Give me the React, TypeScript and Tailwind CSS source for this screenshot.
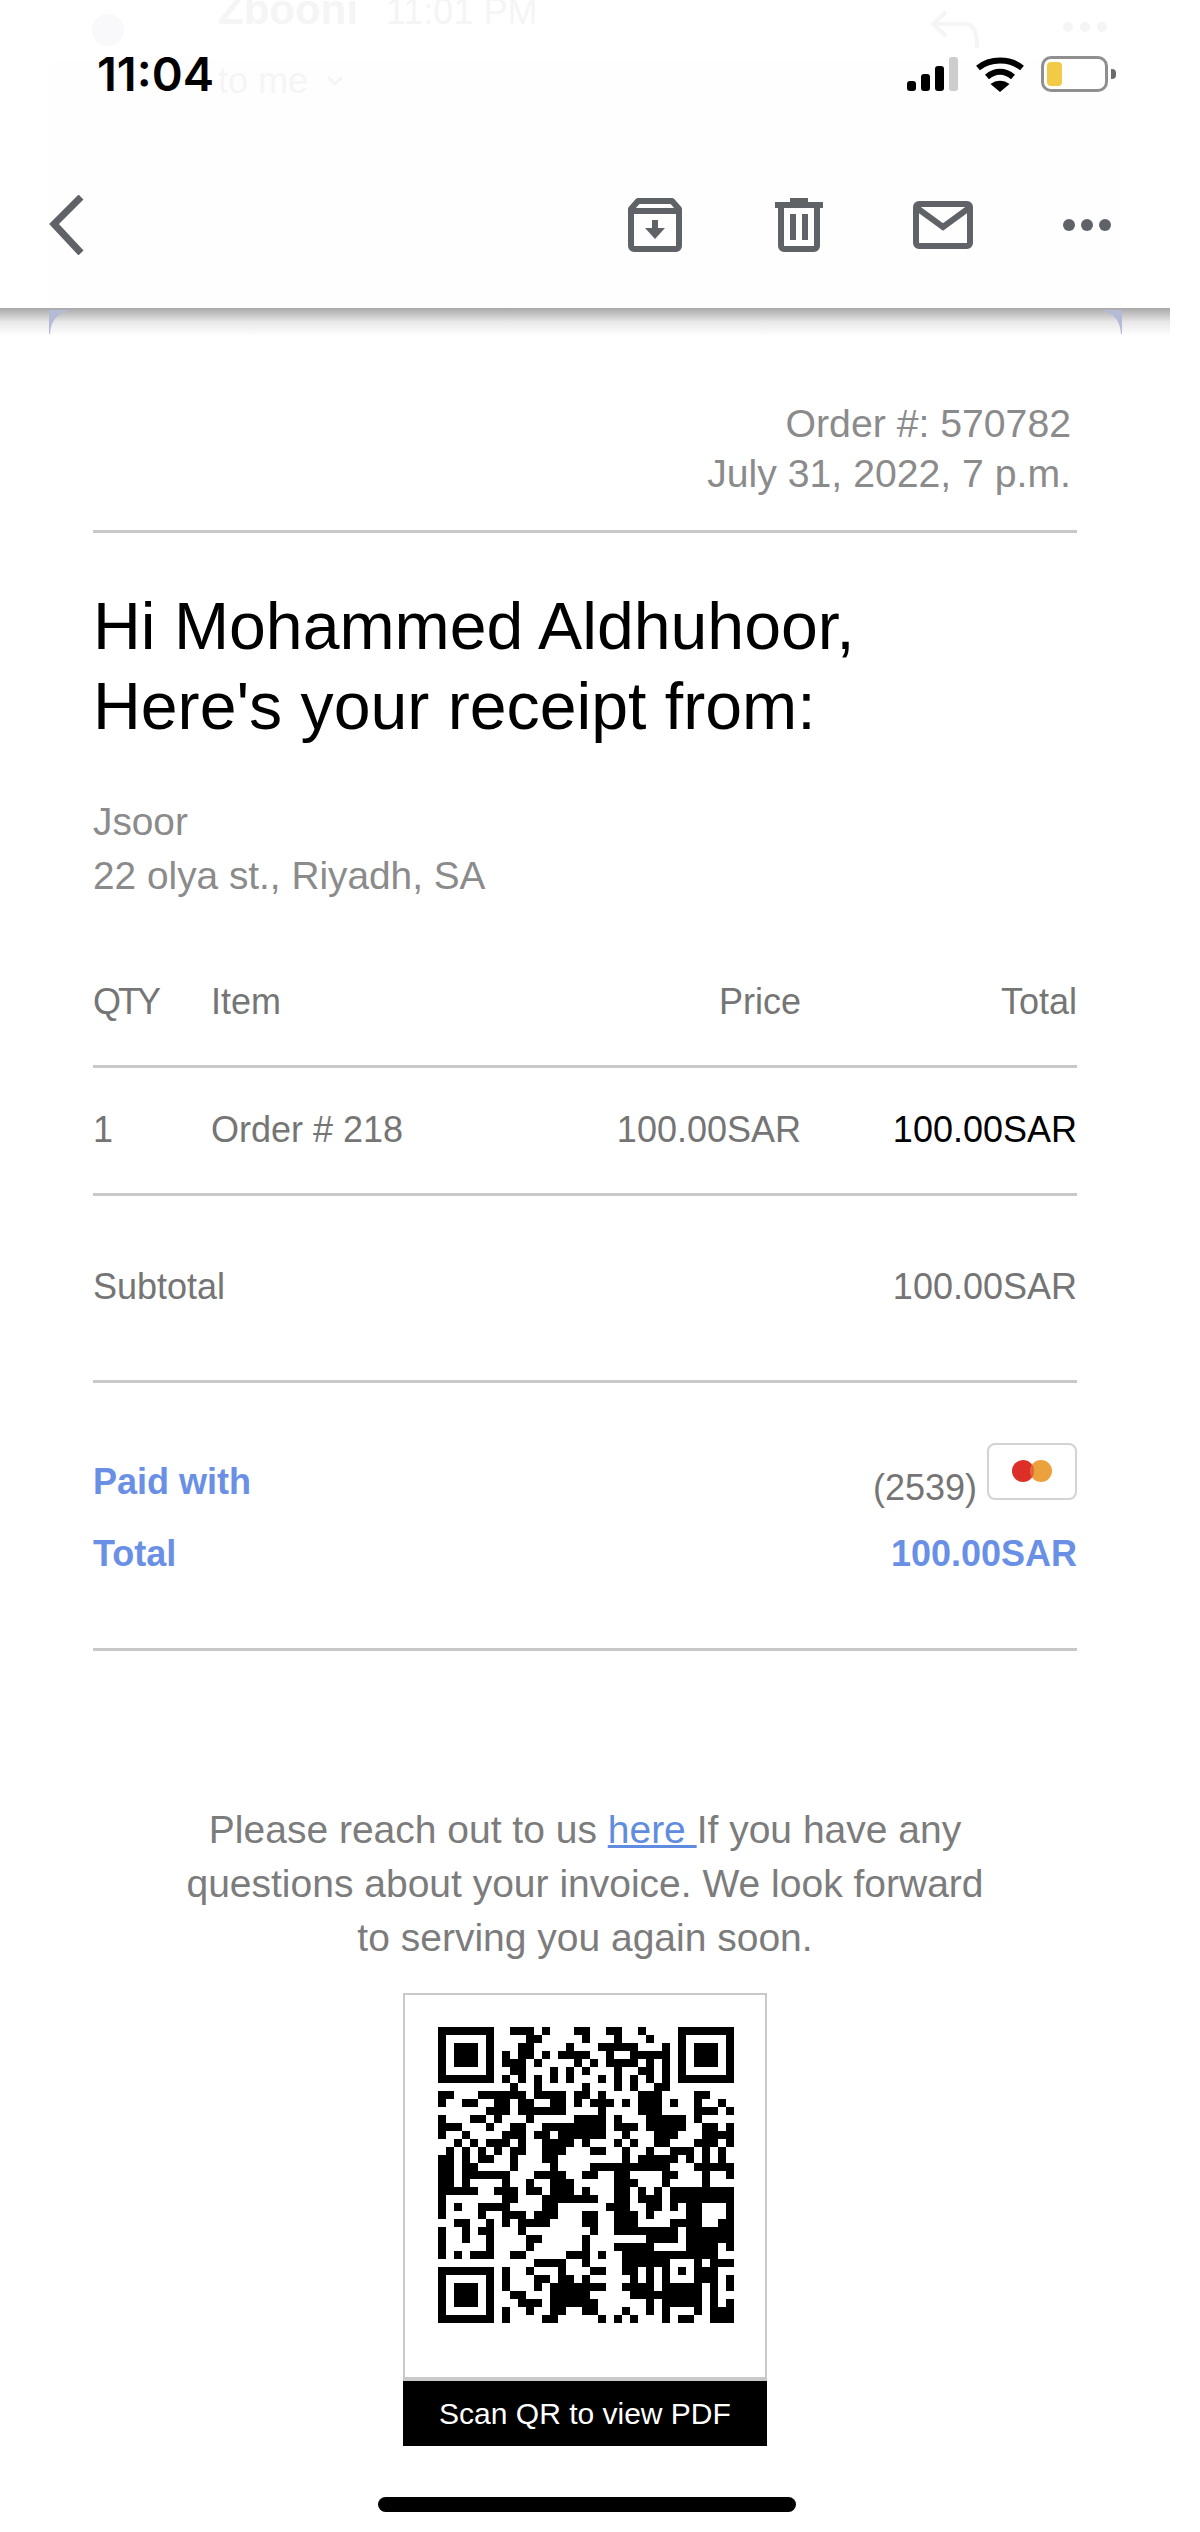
const QR_ROWS: number[][] = [
  [9, 10, 11, 13, 17, 18, 21, 22, 25],
  [11, 12, 18, 22, 26],
  [10, 11, 16, 20, 21, 22, 23, 24, 28],
  [8, 10, 11, 13, 15, 16, 17, 18, 21, 24, 25, 26, 27, 28],
  [8, 9, 10, 12, 17, 19, 21, 22, 23, 24, 26, 28],
  [9, 10, 14, 16, 18, 22, 25, 26, 28],
  [8, 10, 12, 14, 16, 20, 22, 24, 26, 28],
  [9, 12, 18, 22, 24, 27, 28],
  [0, 1, 5, 6, 7, 8, 9, 10, 12, 13, 14, 15, 17, 18, 20, 26, 32, 33],
  [0, 3, 4, 7, 8, 10, 11, 14, 15, 17, 19, 20, 21, 23, 25, 26, 27, 29, 32, 35],
  [6, 7, 8, 10, 11, 12, 13, 14, 15, 20, 25, 26, 27, 32, 33, 34, 36],
  [0, 4, 5, 7, 11, 17, 18, 20, 22, 26, 27, 30, 32],
  [0, 1, 2, 6, 9, 10, 13, 14, 15, 16, 17, 19, 20, 22, 23, 24, 26, 27, 29, 30, 33, 34, 36],
  [0, 3, 8, 9, 10, 12, 13, 15, 16, 17, 19, 20, 23, 27, 28, 29, 33, 34, 35, 36],
  [2, 4, 6, 7, 8, 10, 14, 15, 18, 22, 24, 27, 28, 32, 33, 34, 36],
  [1, 3, 5, 7, 9, 10, 13, 19, 20, 23, 26, 29, 30, 31, 33, 35],
  [0, 1, 3, 5, 6, 9, 13, 14, 23, 25, 26, 27, 28, 29, 31, 33, 35],
  [0, 1, 3, 4, 9, 14, 19, 20, 21, 22, 23, 26, 27, 28, 32, 33, 34, 35, 36],
  [0, 1, 3, 4, 5, 6, 7, 8, 12, 13, 14, 15, 18, 19, 22, 23, 28, 29, 33, 36],
  [0, 1, 3, 8, 11, 15, 16, 23, 24, 28, 33],
  [0, 1, 2, 3, 4, 7, 8, 9, 11, 12, 15, 16, 18, 22, 23, 25, 27, 30, 31, 32, 33, 34, 35, 36],
  [0, 8, 9, 13, 14, 19, 23, 25, 26, 27, 29, 31, 32, 33, 34],
  [0, 2, 5, 6, 7, 8, 13, 14, 21, 22, 23, 26, 27, 29, 31, 32, 36],
  [0, 5, 8, 9, 10, 12, 13, 14, 18, 23, 24, 26, 32, 36],
  [2, 3, 6, 8, 10, 11, 12, 13, 18, 19, 23, 24, 29, 30, 35, 36],
  [0, 3, 5, 6, 10, 19, 23, 24, 25, 27, 31, 33, 35, 36],
  [0, 3, 6, 11, 12, 18, 26, 27, 28, 29, 32, 34, 35, 36],
  [0, 6, 11, 18, 22, 23, 24, 25, 26, 32, 33, 36],
  [0, 2, 4, 5, 6, 9, 10, 18, 20, 23, 24, 25, 28, 29, 30, 31, 32, 33, 34],
  [12, 13, 14, 15, 18, 23, 24, 25, 26, 27, 28, 32, 34, 35, 36],
  [8, 11, 15, 19, 20, 23, 24, 26, 28, 30, 32, 33, 34],
  [8, 12, 13, 15, 16, 18, 24, 26, 28, 32, 33, 34, 36],
  [8, 12, 15, 16, 18, 19, 20, 23, 24, 25, 26, 28, 29, 30, 31, 32, 34, 36],
  [9, 10, 15, 16, 26, 27, 28, 29, 30, 31, 32, 34],
  [10, 11, 12, 15, 19, 26, 28, 29, 30, 31, 32, 34, 36],
  [8, 11, 14, 15, 18, 19, 23, 26, 28, 32, 34, 35, 36],
  [8, 13, 14, 20, 22, 24, 28, 30, 31, 34, 35, 36],
]

// solid patches of the code: [col, row, width, height]
const QR_BLOCKS: number[][] = [
  [13, 12, 5, 1], [13, 13, 1, 1], [15, 13, 3, 1], [13, 14, 4, 1], [13, 15, 3, 1],
  [18, 11, 3, 3], [25, 8, 3, 3], [26, 11, 2, 1], [28, 11, 3, 2],
  [25, 16, 4, 2], [19, 17, 6, 1],
  [12, 18, 4, 1], [14, 19, 2, 3], [16, 21, 3, 1], [10, 24, 4, 1], [13, 21, 1, 3], [5, 22, 4, 1],
  [16, 28, 3, 1], [12, 29, 4, 1], [14, 32, 5, 3],
  [22, 18, 2, 8], [29, 20, 8, 2], [31, 22, 2, 3], [31, 25, 4, 3], [26, 25, 4, 2], [23, 28, 5, 2], [18, 23, 2, 2],
  [24, 33, 9, 1],
]

function Finder({ x, y }: { x: number; y: number }) {
  return (
    <g>
      <path d={`M${x} ${y}h7v7h-7z M${x + 1} ${y + 1}v5h5v-5z`} fillRule="evenodd" />
      <rect x={x + 2} y={y + 2} width={3} height={3} />
    </g>
  )
}

function QrCode() {
  return (
    <svg viewBox="0 0 37 37" className="w-[298px] h-[296px] blur-[0.7px]" fill="#000" shapeRendering="crispEdges">
      <Finder x={0} y={0} />
      <Finder x={30} y={0} />
      <Finder x={0} y={30} />
      {QR_ROWS.map((cols, r) =>
        cols.map((c) => <rect key={r + '-' + c} x={c} y={r} width={1.02} height={1.02} />)
      )}
      {QR_BLOCKS.map(([c, r, w, h]) => (
        <rect key={'b' + c + '-' + r} x={c} y={r} width={w} height={h} />
      ))}
    </svg>
  )
}

function StatusIcons() {
  return (
    <div className="flex items-center gap-[17px]">
      <svg width="52" height="34" viewBox="0 0 52 34">
        <rect x="0" y="24" width="9" height="10" rx="3" fill="#000" />
        <rect x="14" y="17" width="9" height="17" rx="3" fill="#000" />
        <rect x="28" y="9" width="9" height="25" rx="3" fill="#000" />
        <rect x="42" y="0" width="9" height="34" rx="3" fill="#cdcdcd" />
      </svg>
      <svg width="48" height="36" viewBox="0 0 48 36">
        <path d="M2 12C14 2 34 2 46 12" fill="none" stroke="#000" strokeWidth="6" />
        <path d="M11 21C19 14 29 14 37 21" fill="none" stroke="#000" strokeWidth="6" />
        <path d="M24 36L14.5 28C20 23.5 28 23.5 33.500 28z" fill="#000" />
      </svg>
      <div className="flex items-center gap-[3px]">
        <div className="w-[67px] h-[36px] rounded-[10px] border-[3px] border-[#8f8f8f] p-[3px] bg-white">
          <div className="w-[15px] h-full rounded-[4px] bg-[#f2ca45]" />
        </div>
        <div className="w-[5px] h-[10px] rounded-r-[4px] bg-[#6b6b6b]" />
      </div>
    </div>
  )
}

function GhostEmail() {
  // the mail scrolled under the translucent bar
  return (
    <div className="absolute inset-0 text-[#f5f5f6]">
      <div className="absolute left-[92px] top-[14px] w-[32px] h-[32px] rounded-full bg-[#f9f9fc]" />
      <div className="absolute left-[218px] top-[-14px] text-[42px] leading-[48px] font-bold">Zbooni</div>
      <div className="absolute left-[386px] top-[-6px] text-[36px] leading-[36px]">11:01 PM</div>
      <div className="absolute left-[218px] top-[63px] text-[36px] leading-[36px] flex items-center gap-[18px]">
        to me
        <svg width="18" height="12" viewBox="0 0 18 12" fill="none" stroke="#f5f5f6" strokeWidth="3">
          <path d="M2 2l7 7 7-7" />
        </svg>
      </div>
      <svg className="absolute left-[930px] top-[10px]" width="52" height="40" viewBox="0 0 52 40" fill="none" stroke="#f5f5f6" strokeWidth="4">
        <path d="M16 2L3 14l13 12M3 14h32c8 0 12 6 12 24" />
      </svg>
      <div className="absolute left-[1063px] top-[22px] flex gap-[7px]">
        <div className="w-[10px] h-[10px] rounded-full bg-[#f5f5f6]" />
        <div className="w-[10px] h-[10px] rounded-full bg-[#f5f5f6]" />
        <div className="w-[10px] h-[10px] rounded-full bg-[#f5f5f6]" />
      </div>
    </div>
  )
}

function Toolbar() {
  const c = '#5f6368'
  return (
    <div className="relative flex items-center h-[60px] pl-[49px] pr-[59px] mt-[103px]">
      <svg width="36" height="60" viewBox="0 0 36 60" fill="none" stroke={c} strokeWidth="7">
        <path d="M32 2L5 29l27 29" />
      </svg>
      <div className="ml-auto flex items-center">
        <svg width="54" height="54" viewBox="0 0 54 54" fill="none" stroke={c} strokeWidth="6">
          <path d="M10 3h34l7 8v37a3 3 0 0 1-3 3H6a3 3 0 0 1-3-3V11z" strokeLinejoin="round" />
          <path d="M3 13h48" />
          <path d="M27 22v14" />
          <path d="M17 30h20L27 41z" fill={c} stroke="none" />
        </svg>
        <svg className="ml-[93px]" width="48" height="54" viewBox="0 0 48 54" fill="none" stroke={c}>
          <rect x="0" y="4" width="48" height="6" fill={c} stroke="none" />
          <rect x="15" y="0" width="18" height="5" fill={c} stroke="none" />
          <path d="M6 9v39a3 3 0 0 0 3 3h30a3 3 0 0 0 3-3V9" strokeWidth="6" />
          <path d="M18 16v26M30 16v26" strokeWidth="6" />
        </svg>
        <svg className="ml-[90px]" width="60" height="48" viewBox="0 0 60 48" fill="none" stroke={c} strokeWidth="6">
          <rect x="3" y="3" width="54" height="42" rx="3" />
          <path d="M4 7l26 19L56 7" />
        </svg>
        <div className="ml-[90px] flex gap-[6px]">
          <div className="w-[12px] h-[12px] rounded-full bg-[#5f6368]" />
          <div className="w-[12px] h-[12px] rounded-full bg-[#5f6368]" />
          <div className="w-[12px] h-[12px] rounded-full bg-[#5f6368]" />
        </div>
      </div>
    </div>
  )
}

function TopBar() {
  return (
    <div className="absolute left-0 top-0 w-[1170px] h-[308px] bg-white">
      <div className="absolute left-[50px] top-[60px] w-[1072px] h-[248px] bg-[#fefefe]" />
      <GhostEmail />
      <div className="relative flex items-center justify-between h-[36px] mt-[56px] pl-[97px] pr-[54px]">
        <span className="font-['Inter',sans-serif] text-[47px] leading-[36px] font-semibold text-black">11:04</span>
        <StatusIcons />
      </div>
      <Toolbar />
      <div className="absolute left-0 top-[308px] w-full h-[28px] bg-gradient-to-b from-[#a8a8a8] via-[#e8e8e8] to-white" />
      <svg className="absolute left-[49px] top-[308px]" width="24" height="26" viewBox="0 0 24 26">
        <path d="M0 2h22C8 5 2 12 1 26H0z" fill="#b4bbd6" />
      </svg>
      <svg className="absolute left-[1098px] top-[308px]" width="24" height="26" viewBox="0 0 24 26">
        <path d="M24 2H2c14 3 20 10 21 24h1z" fill="#b4bbd6" />
      </svg>
    </div>
  )
}

const hr = 'h-[3px] bg-[#c8c8c8]'

export default function App() {
  return (
    <div className="relative w-[1200px] h-[2532px] bg-white overflow-hidden font-['Liberation_Sans',Arial,sans-serif]">
      <main className="w-[984px] ml-[93px] pt-[399px]">
        <div className="text-right pr-[6px] text-[39.2px] leading-[50px] text-[#8b8b8b]">
          <div>Order #: 570782</div>
          <div>July 31, 2022, 7 p.m.</div>
        </div>
        <div className={'mt-[31px] ' + hr} />

        <h1 className="mt-[54px] text-[66.2px] leading-[79.5px] text-black font-normal">
          Hi Mohammed Aldhuhoor,
          <br />
          Here's your receipt from:
        </h1>

        <div className="mt-[49px] text-[38.8px] leading-[54px] text-[#8b8b8b]">
          <div>Jsoor</div>
          <div>22 olya st., Riyadh, SA</div>
        </div>

        <div className="mt-[72px] text-[36px] leading-[54px] text-[#757575]">
          <div className="flex">
            <div className="w-[118px] tracking-[-3px]">QTY</div>
            <div>Item</div>
            <div className="ml-auto w-[280px] text-right">Price</div>
            <div className="w-[276px] text-right">Total</div>
          </div>
          <div className={'mt-[36px] ' + hr} />
          <div className="flex mt-[35px]">
            <div className="w-[118px]">1</div>
            <div>Order # 218</div>
            <div className="ml-auto w-[280px] text-right">100.00SAR</div>
            <div className="w-[276px] text-right text-black">100.00SAR</div>
          </div>
          <div className={'mt-[36px] ' + hr} />
          <div className="flex justify-between mt-[64px]">
            <div>Subtotal</div>
            <div>100.00SAR</div>
          </div>
          <div className={'mt-[66px] ' + hr} />

          <div className="flex justify-between mt-[72px] h-[54px]">
            <div className="font-bold text-[#6a90e6]">Paid with</div>
            <div className="flex items-start">
              <span className="mt-[6px]">(2539)</span>
              <div className="ml-[10px] -mt-[12px] w-[90px] h-[57px] rounded-[8px] border-2 border-[#d3d3d3] bg-white flex justify-center pt-[14px]">
                <svg width="40" height="24" viewBox="0 0 40 24">
                  <circle cx="29" cy="12" r="11" fill="#eba13c" />
                  <circle cx="11" cy="12" r="11" fill="#dc2f28" />
                  <path d="M20 5.500a11 11 0 0 1 0 13a11 11 0 0 1 0-13z" fill="#e4683a" />
                </svg>
              </div>
            </div>
          </div>
          <div className="flex justify-between mt-[18px] font-bold text-[#6a90e6]">
            <div>Total</div>
            <div>100.00SAR</div>
          </div>
          <div className={'mt-[67px] ' + hr} />
        </div>

        <p className="mt-[152px] text-center text-[39px] leading-[54px] text-[#7c7c7c]">
          Please reach out to us <span className="text-[#5f8ce0] underline">here </span>If you have any
          <br />
          questions about your invoice. We look forward
          <br />
          to serving you again soon.
        </p>

        <div className="mt-[28px] mx-auto w-[364px]">
          <div className="h-[388px] border-[2px] border-b-[4px] border-[#c9c9c9] flex justify-center pt-[32px] pl-[1px]">
            <QrCode />
          </div>
          <div className="h-[65px] bg-black flex items-center justify-center text-[30px] text-white">
            Scan QR to view PDF
          </div>
        </div>
      </main>

      <TopBar />
      <div className="absolute left-[378px] top-[2497px] w-[418px] h-[15px] rounded-full bg-black" />
    </div>
  )
}
